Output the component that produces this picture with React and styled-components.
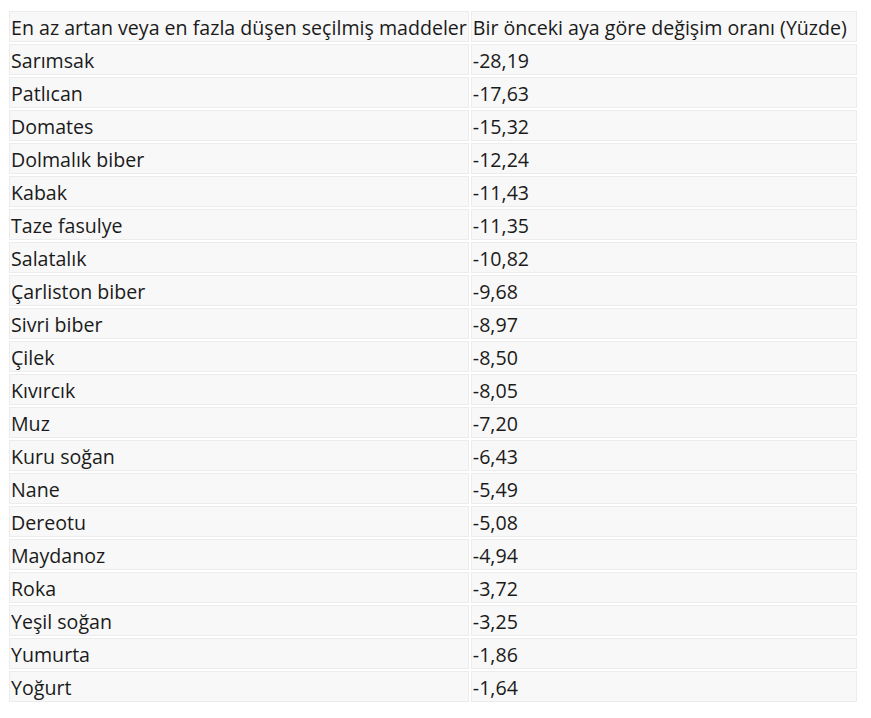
import React from "react";
import styled, { createGlobalStyle } from "styled-components";

const GlobalStyle = createGlobalStyle`
  body {
    margin: 0;
    background: #ffffff;
    font-family: "Open Sans", "Noto Sans", sans-serif;
  }
`;

const Wrapper = styled.div`
  padding: 9px 0 0 7px;
`;

const Table = styled.table`
  border-collapse: separate;
  border-spacing: 2px;
  color: #1b1b1b;
`;

const Cell = styled.td`
  box-sizing: border-box;
  background: #f8f8f8;
  border: 1px solid #ececec;
  height: 31px;
  padding: 2px 1px 0;
  font-size: 19.6px;
  line-height: 27px;
  white-space: nowrap;
  vertical-align: middle;
  width: ${(p) => (p.$wide ? "386px" : "auto")};
`;

const rows = [
  ["Sarımsak", "-28,19"],
  ["Patlıcan", "-17,63"],
  ["Domates", "-15,32"],
  ["Dolmalık biber", "-12,24"],
  ["Kabak", "-11,43"],
  ["Taze fasulye", "-11,35"],
  ["Salatalık", "-10,82"],
  ["Çarliston biber", "-9,68"],
  ["Sivri biber", "-8,97"],
  ["Çilek", "-8,50"],
  ["Kıvırcık", "-8,05"],
  ["Muz", "-7,20"],
  ["Kuru soğan", "-6,43"],
  ["Nane", "-5,49"],
  ["Dereotu", "-5,08"],
  ["Maydanoz", "-4,94"],
  ["Roka", "-3,72"],
  ["Yeşil soğan", "-3,25"],
  ["Yumurta", "-1,86"],
  ["Yoğurt", "-1,64"],
];

export default function App() {
  return (
    <Wrapper>
      <GlobalStyle />
      <Table>
        <tbody>
          <tr>
            <Cell>En az artan veya en fazla düşen seçilmiş maddeler</Cell>
            <Cell $wide>Bir önceki aya göre değişim oranı (Yüzde)</Cell>
          </tr>
          {rows.map(([name, value]) => (
            <tr key={name}>
              <Cell>{name}</Cell>
              <Cell $wide>{value}</Cell>
            </tr>
          ))}
        </tbody>
      </Table>
    </Wrapper>
  );
}
